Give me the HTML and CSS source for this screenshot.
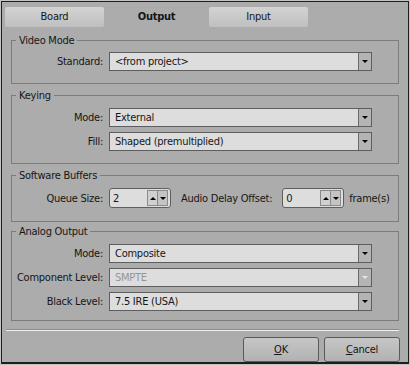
FILE: index.html
```html
<!DOCTYPE html>
<html lang="en">
<head>
    <meta charset="UTF-8">
    <title>Output Settings</title>
    <link rel="stylesheet" href="styles.css">
</head>
<body>
    <div class="window">
        <div class="dialog">
            <div class="tabs">
                <div class="tab">Board</div>
                <div class="tab active">Output</div>
                <div class="tab">Input</div>
            </div>

            <fieldset class="group group-video">
                <legend>Video Mode</legend>
                <div class="row">
                    <label class="label">Standard:</label>
                    <div class="select"><span class="value">&lt;from project&gt;</span><span class="drop"><i class="arrow"></i></span></div>
                </div>
            </fieldset>

            <fieldset class="group group-keying">
                <legend>Keying</legend>
                <div class="row">
                    <label class="label">Mode:</label>
                    <div class="select"><span class="value">External</span><span class="drop"><i class="arrow"></i></span></div>
                </div>
                <div class="row">
                    <label class="label">Fill:</label>
                    <div class="select"><span class="value">Shaped (premultiplied)</span><span class="drop"><i class="arrow"></i></span></div>
                </div>
            </fieldset>

            <fieldset class="group group-buffers">
                <legend>Software Buffers</legend>
                <div class="row">
                    <label class="label">Queue Size:</label>
                    <div class="spin">
                        <span class="value">2</span>
                        <span class="spin-btn"><i class="arrow up"></i></span>
                        <span class="spin-btn"><i class="arrow"></i></span>
                    </div>
                    <label class="inline-label">Audio Delay Offset:</label>
                    <div class="spin">
                        <span class="value">0</span>
                        <span class="spin-btn"><i class="arrow up"></i></span>
                        <span class="spin-btn"><i class="arrow"></i></span>
                    </div>
                    <span class="unit">frame(s)</span>
                </div>
            </fieldset>

            <fieldset class="group group-analog">
                <legend>Analog Output</legend>
                <div class="row">
                    <label class="label">Mode:</label>
                    <div class="select"><span class="value">Composite</span><span class="drop"><i class="arrow"></i></span></div>
                </div>
                <div class="row">
                    <label class="label">Component Level:</label>
                    <div class="select disabled"><span class="value">SMPTE</span><span class="drop"><i class="arrow"></i></span></div>
                </div>
                <div class="row">
                    <label class="label">Black Level:</label>
                    <div class="select"><span class="value">7.5 IRE (USA)</span><span class="drop"><i class="arrow"></i></span></div>
                </div>
            </fieldset>

            <div class="separator"></div>

            <div class="buttons">
                <button class="button"><u>O</u>K</button>
                <button class="button"><u>C</u>ancel</button>
            </div>
        </div>
    </div>
</body>
</html>
```

FILE: styles.css
```css
body {
    margin: 0;
    background-color: #c8c8c8;
    font-family: "DejaVu Sans Condensed", "DejaVu Sans", sans-serif;
    font-size: 11px;
    letter-spacing: -0.25px;
    color: #161616;
}

.window {
    width: 410px;
    height: 365px;
    box-sizing: border-box;
    border: 1px solid #c4c4c4;
}

.dialog {
    height: 363px;
    box-sizing: border-box;
    border: 1px solid #1e1e1e;
    border-bottom-width: 2px;
    background-color: #acacac;
    padding-top: 5px;
}

/* Tabs */
.tabs {
    display: flex;
    gap: 3px;
    padding-left: 3px;
    height: 20px;
}

.tab {
    width: 99px;
    height: 20px;
    line-height: 19px;
    text-align: center;
    border-radius: 2px;
    background: linear-gradient(#d3d3d3, #bfbfbf);
}

.tab.active {
    background: none;
    font-weight: bold;
}

/* Group boxes */
.group {
    margin: 0 9px 0 9px;
    padding: 0 0 12px 0;
    border: 1px solid #7c7c7c;
}

.group legend {
    margin-left: 4px;
    padding: 0 3px;
    line-height: 13px;
}

.group-video {
    margin-top: 7px;
}

.group-keying {
    margin-top: 5px;
}

.group-buffers {
    margin-top: 5px;
    padding-bottom: 13px;
}

.group-analog {
    margin-top: 3px;
    padding-bottom: 9px;
}

.row {
    display: flex;
    align-items: center;
    margin-top: 5px;
}

.group-keying .row:first-of-type,
.group-buffers .row,
.group-analog .row:first-of-type {
    margin-top: 6px;
}

.label {
    width: 91px;
    margin-right: 6px;
    text-align: right;
}

/* Drop-down boxes */
.select {
    display: flex;
    width: 263px;
    height: 19px;
    box-sizing: border-box;
    border: 1px solid #5e5e5e;
    background-color: #dddddd;
}

.select .value {
    flex: 1;
    padding-left: 5px;
    line-height: 17px;
}

.select .drop {
    display: flex;
    align-items: center;
    justify-content: center;
    width: 12px;
    border-left: 1px solid #6a6a6a;
    background-color: #b4b4b4;
}

.arrow {
    width: 0;
    height: 0;
    border-left: 3px solid transparent;
    border-right: 3px solid transparent;
    border-top: 3px solid #000;
}

.arrow.up {
    border-top: none;
    border-bottom: 3px solid #000;
}

.select.disabled .value {
    color: #959595;
}

.select.disabled .arrow {
    border-top-color: #e6e6e6;
}

/* Spin boxes */
.spin {
    display: flex;
    align-items: center;
    width: 62px;
    height: 20px;
    box-sizing: border-box;
    border: 1px solid #5e5e5e;
    border-radius: 3px;
    background-color: #dddddd;
    padding-right: 2px;
}

.spin .value {
    flex: 1;
    padding-left: 3px;
}

.spin-btn {
    display: flex;
    align-items: center;
    justify-content: center;
    width: 9px;
    height: 14px;
    border: 1px solid #8a8a8a;
    background-color: #d0d0d0;
}

.spin-btn + .spin-btn {
    border-left: none;
    background-color: #c4c4c4;
}

.inline-label {
    margin: 0 10px 0 10px;
}

.unit {
    margin-left: 5px;
}

/* Bottom */
.separator {
    margin: 8px 9px 0 4px;
    border-top: 1px solid #8c8c8c;
    border-bottom: 1px solid #efefef;
}

.buttons {
    display: flex;
    justify-content: flex-end;
    gap: 5px;
    padding: 6px 8px 0 0;
}

.button {
    width: 76px;
    height: 25px;
    border: 1px solid #5a5a5a;
    border-radius: 3px;
    background: linear-gradient(#c6c6c6, #b2b2b2);
    font-family: inherit;
    font-size: 11px;
    letter-spacing: inherit;
    color: #161616;
    padding: 0;
}
```
